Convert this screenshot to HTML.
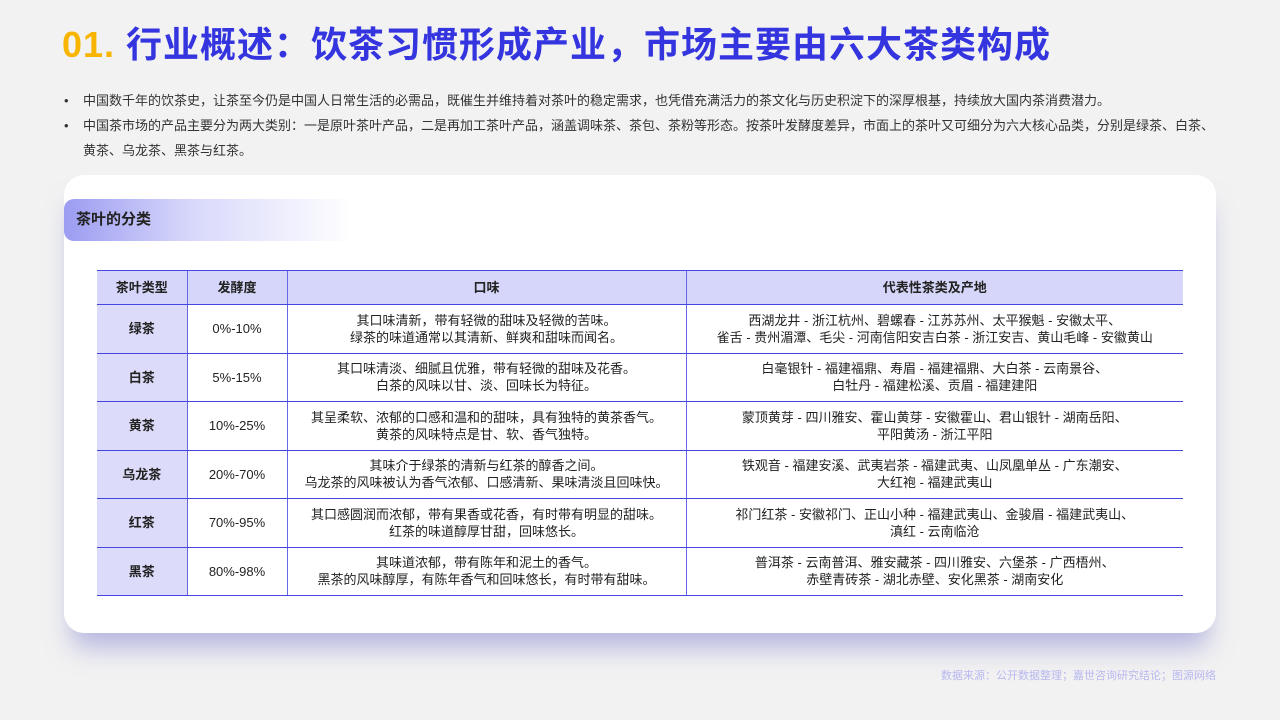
<!DOCTYPE html>
<html><head><meta charset="utf-8"><style>
*{margin:0;padding:0;box-sizing:border-box}
body{width:1280px;height:720px;background:#f2f2f2;font-family:"Liberation Sans","Noto Sans CJK SC",sans-serif;position:relative;overflow:hidden;color:#222}
.title{position:absolute;left:62px;top:20px;font-size:36px;font-weight:bold;color:#3535e0;letter-spacing:1px;white-space:nowrap;line-height:50px}
.title span{color:#f7b500;font-weight:900}
.bul{position:absolute;left:64px;font-size:13px;line-height:25px;color:#333;width:1170px}
.bul div{padding-left:19px;position:relative}
.bul div:before{content:"•";position:absolute;left:0}
.card{position:absolute;left:64px;top:175px;width:1152px;height:458px;background:#fff;border-radius:20px;box-shadow:0 22px 26px -8px rgba(130,130,210,.55)}
.tag{position:absolute;left:64px;top:199px;width:290px;height:42px;border-radius:10px 0 0 10px;background:linear-gradient(90deg,#9c9cf2,#d9d9fb 45%,#fff 100%);font-size:15px;font-weight:bold;line-height:42px;padding-left:12px;color:#222}
table{position:absolute;left:97px;top:270px;width:1086px;border-collapse:collapse;font-size:13px;color:#222}
td,th{border-top:1.5px solid #4545e0;border-bottom:1.5px solid #4545e0;text-align:center;line-height:17px}
td+td,th+th{border-left:1.5px solid #6666e8}
th{background:#d6d6fa;height:34px;font-weight:bold}
td{height:48.5px}
td:first-child{background:#dcdcfa;font-weight:bold}
.src{position:absolute;right:64px;top:667px;font-size:11px;color:#b8b8f0}
</style></head><body>
<div class="title"><span>01.</span> 行业概述：饮茶习惯形成产业，市场主要由六大茶类构成</div>
<div class="bul" style="top:88px">
<div>中国数千年的饮茶史，让茶至今仍是中国人日常生活的必需品，既催生并维持着对茶叶的稳定需求，也凭借充满活力的茶文化与历史积淀下的深厚根基，持续放大国内茶消费潜力。</div>
<div>中国茶市场的产品主要分为两大类别：一是原叶茶叶产品，二是再加工茶叶产品，涵盖调味茶、茶包、茶粉等形态。按茶叶发酵度差异，市面上的茶叶又可细分为六大核心品类，分别是绿茶、白茶、<br>黄茶、乌龙茶、黑茶与红茶。</div>
</div>
<div class="card"></div>
<div class="tag">茶叶的分类</div>
<table>
<colgroup><col style="width:90px"><col style="width:100px"><col style="width:399px"><col></colgroup>
<tr><th>茶叶类型</th><th>发酵度</th><th>口味</th><th>代表性茶类及产地</th></tr>
<tr><td>绿茶</td><td>0%-10%</td><td>其口味清新，带有轻微的甜味及轻微的苦味。<br>绿茶的味道通常以其清新、鲜爽和甜味而闻名。</td><td>西湖龙井 - 浙江杭州、碧螺春 - 江苏苏州、太平猴魁 - 安徽太平、<br>雀舌 - 贵州湄潭、毛尖 - 河南信阳安吉白茶 - 浙江安吉、黄山毛峰 - 安徽黄山</td></tr>
<tr><td>白茶</td><td>5%-15%</td><td>其口味清淡、细腻且优雅，带有轻微的甜味及花香。<br>白茶的风味以甘、淡、回味长为特征。</td><td>白毫银针 - 福建福鼎、寿眉 - 福建福鼎、大白茶 - 云南景谷、<br>白牡丹 - 福建松溪、贡眉 - 福建建阳</td></tr>
<tr><td>黄茶</td><td>10%-25%</td><td>其呈柔软、浓郁的口感和温和的甜味，具有独特的黄茶香气。<br>黄茶的风味特点是甘、软、香气独特。</td><td>蒙顶黄芽 - 四川雅安、霍山黄芽 - 安徽霍山、君山银针 - 湖南岳阳、<br>平阳黄汤 - 浙江平阳</td></tr>
<tr><td>乌龙茶</td><td>20%-70%</td><td>其味介于绿茶的清新与红茶的醇香之间。<br>乌龙茶的风味被认为香气浓郁、口感清新、果味清淡且回味快。</td><td>铁观音 - 福建安溪、武夷岩茶 - 福建武夷、山凤凰单丛 - 广东潮安、<br>大红袍 - 福建武夷山</td></tr>
<tr><td>红茶</td><td>70%-95%</td><td>其口感圆润而浓郁，带有果香或花香，有时带有明显的甜味。<br>红茶的味道醇厚甘甜，回味悠长。</td><td>祁门红茶 - 安徽祁门、正山小种 - 福建武夷山、金骏眉 - 福建武夷山、<br>滇红 - 云南临沧</td></tr>
<tr><td>黑茶</td><td>80%-98%</td><td>其味道浓郁，带有陈年和泥土的香气。<br>黑茶的风味醇厚，有陈年香气和回味悠长，有时带有甜味。</td><td>普洱茶 - 云南普洱、雅安藏茶 - 四川雅安、六堡茶 - 广西梧州、<br>赤壁青砖茶 - 湖北赤壁、安化黑茶 - 湖南安化</td></tr>
</table>
<div class="src">数据来源：公开数据整理；嘉世咨询研究结论；图源网络</div>
</body></html>
